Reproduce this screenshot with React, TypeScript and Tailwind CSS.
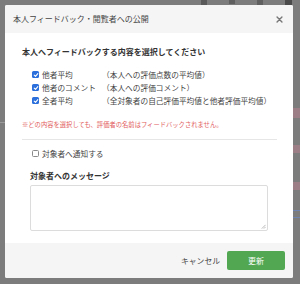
const font = { fontFamily: '"Noto Sans CJK JP", "Noto Sans", sans-serif' };

function CheckBox({ checked }: { checked: boolean }) {
  if (!checked) {
    return <span className="w-[7px] h-[7px] shrink-0 rounded-[1.5px] border border-[#8a8a8a] bg-white" />;
  }
  return (
    <span className="w-[7px] h-[7px] shrink-0 rounded-[1.5px] bg-[#2a6fdb] flex items-center justify-center">
      <svg viewBox="0 0 10 10" className="w-[6px] h-[6px]">
        <path d="M2 5.2 L4.2 7.3 L8 2.8" fill="none" stroke="white" strokeWidth="1.8" strokeLinecap="round" strokeLinejoin="round" />
      </svg>
    </span>
  );
}

const items = [
  { label: '他者平均', note: '（本人への評価点数の平均値）' },
  { label: '他者のコメント', note: '（本人への評価コメント）' },
  { label: '全者平均', note: '（全対象者の自己評価平均値と他者評価平均値）' },
];

export default function App() {
  return (
    <div className="relative w-[300px] h-[284px] overflow-hidden bg-[#7c7c7c]" style={font}>
      {/* page behind the overlay */}
      <div className="absolute top-0 left-[201px] flex gap-[22px]">
        <span className="w-[6px] h-[5px] bg-[#5a5a5a]" />
        <span className="w-[6px] h-[4px] bg-[#5f5f5f]" />
        <span className="w-[6px] h-[5px] bg-[#5f5f5f]" />
        <span className="w-[7px] h-[6px] bg-[#4a4a4a]" />
      </div>
      <div className="absolute left-0 top-[122px] w-[5px] h-px bg-[#9a9a9a]" />
      <div className="absolute right-0 top-[108px] w-[7px] h-[10px] bg-[#9c7f86]" />
      <div className="absolute right-0 top-[145px] w-[7px] h-[8px] bg-[#9c7f86]" />
      <div className="absolute right-0 top-[182px] w-[7px] h-[8px] bg-[#9c7f86]" />
      <div className="absolute right-0 top-[210px] w-[7px] h-px bg-[#6f83b0]" />
      <div className="absolute right-0 top-[217px] w-[7px] h-px bg-[#6f83b0]" />

      {/* modal */}
      <div className="absolute left-[5px] top-[5px] w-[288px] h-[273px] bg-white rounded-[2px] flex flex-col overflow-hidden">
        <div className="h-[28px] shrink-0 bg-[#f5f5f5] flex items-center justify-between pl-[8px] pr-[10px]">
          <span className="text-[8px] leading-[10px] text-[#444]">本人フィードバック・閲覧者への公開</span>
          <svg viewBox="0 0 10 10" className="w-[7px] h-[7px]">
            <path d="M1.5 1.5 L8.5 8.5 M8.5 1.5 L1.5 8.5" stroke="#777" strokeWidth="2" strokeLinecap="round" />
          </svg>
        </div>

        <div className="flex-1 pl-[17px] pr-[16px] flex flex-col">
          <div className="mt-[14px] text-[8px] leading-[10px] font-bold text-[#333]">本人へフィードバックする内容を選択してください</div>

          <div className="mt-[11px] pl-[10px] flex flex-col">
            {items.map((it) => (
              <div key={it.label} className="h-[13px] flex items-center text-[7.7px] text-[#444]">
                <CheckBox checked />
                <span className="ml-[3px] w-[60px] shrink-0 whitespace-nowrap">{it.label}</span>
                <span className="whitespace-nowrap">{it.note}</span>
              </div>
            ))}
          </div>

          <div className="mt-[14px] text-[6.3px] leading-[8px] text-[#e25c5c] whitespace-nowrap">
            ※どの内容を選択しても、評価者の名前はフィードバックされません。
          </div>

          <div className="mt-[10px] h-px bg-[#e6e6e6]" />

          <div className="mt-[7px] pl-[10px] h-[13px] flex items-center text-[7.7px] text-[#444]">
            <CheckBox checked={false} />
            <span className="ml-[3px]">対象者へ通知する</span>
          </div>

          <div className="mt-[11px] pl-[8px] text-[8px] leading-[10px] font-bold text-[#333]">対象者へのメッセージ</div>

          <div className="mt-[4px] ml-[8px] w-[238px] h-[46px] relative border border-[#dcdcdc] rounded-[2px] bg-white">
            <svg viewBox="0 0 6 6" className="absolute right-[1px] bottom-[1px] w-[5px] h-[5px]">
              <path d="M5.5 1 L1 5.5 M5.5 3.5 L3.5 5.5" stroke="#999" strokeWidth="0.8" />
            </svg>
          </div>
        </div>

        <div className="h-[35px] shrink-0 bg-[#f5f5f5] flex items-center justify-end pr-[8px] gap-[7px]">
          <span className="text-[7.8px] text-[#444]">キャンセル</span>
          <span className="w-[58px] h-[19px] rounded-[2px] bg-[#52a852] flex items-center justify-center text-[8px] text-white">更新</span>
        </div>
      </div>
    </div>
  );
}
